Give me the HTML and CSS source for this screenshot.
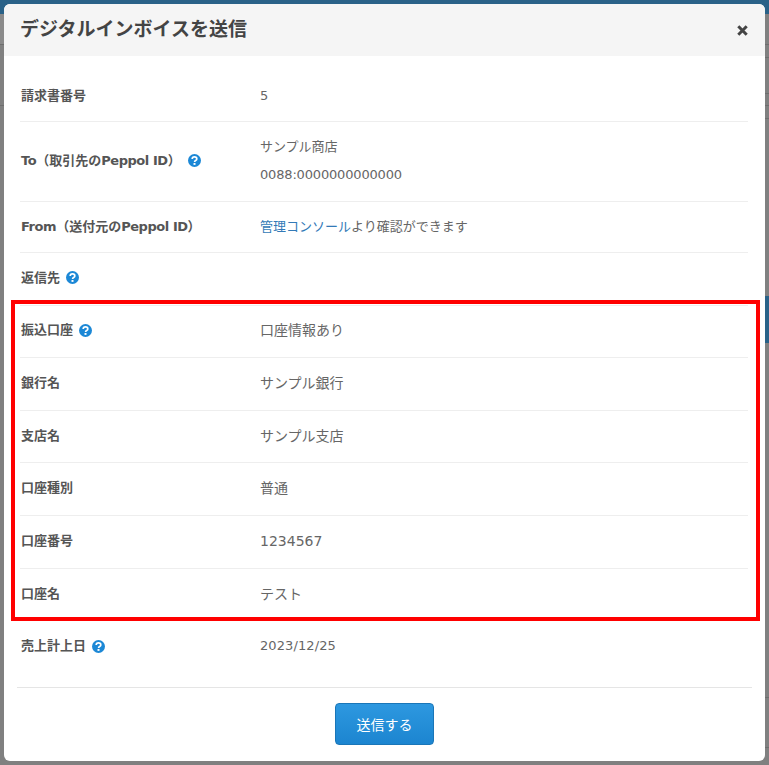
FILE: index.html
```html
<!DOCTYPE html>
<html lang="ja">

<head>
	<meta charset="UTF-8">
	<meta name="viewport" content="width=device-width, initial-scale=1.0">
	<title>デジタルインボイスを送信</title>
	<link rel="stylesheet" href="styles.css">
</head>

<body>
	<svg width="0" height="0" class="defs">
		<symbol id="help" viewBox="0 0 13 13">
			<circle cx="6.5" cy="6.5" r="6.5" fill="#1c88d6" />
			<path d="M4.2 5.1c0-1.4 1-2.2 2.3-2.2s2.3.8 2.3 2c0 1.7-2.2 1.6-2.2 3" fill="none" stroke="#fff" stroke-width="1.7" />
			<rect x="5.5" y="9" width="2" height="1.9" fill="#fff" />
		</symbol>
	</svg>

	<div class="page-head"></div>
	<div class="side side-left"></div>
	<div class="side side-right"></div>

	<div class="modal">
		<div class="modal-head">
			<h3>デジタルインボイスを送信</h3>
			<svg class="close" width="11" height="11" viewBox="0 0 11 11">
				<path d="M1.3 1.3l8.4 8.4M9.7 1.3l-8.4 8.4" stroke="#444" stroke-width="3" />
			</svg>
		</div>

		<div class="modal-body">
			<div class="row row-first">
				<div class="label">請求書番号</div>
				<div class="value">5</div>
			</div>
			<div class="row row-tall">
				<div class="label"><span class="latin">To</span>（取引先の<span class="latin">Peppol ID</span>）<svg class="help help-wide"><use href="#help" /></svg></div>
				<div class="value">
					<p>サンプル商店</p>
					<p class="peppol-id">0088:0000000000000</p>
				</div>
			</div>
			<div class="row row-from">
				<div class="label"><span class="latin">From</span>（送付元の<span class="latin">Peppol ID</span>）</div>
				<div class="value"><a href="#">管理コンソール</a>より確認ができます</div>
			</div>
			<div class="row row-reply">
				<div class="label">返信先<svg class="help"><use href="#help" /></svg></div>
				<div class="value"></div>
			</div>
			<div class="row bank">
				<div class="label">振込口座<svg class="help"><use href="#help" /></svg></div>
				<div class="value">口座情報あり</div>
			</div>
			<div class="row bank">
				<div class="label">銀行名</div>
				<div class="value">サンプル銀行</div>
			</div>
			<div class="row bank">
				<div class="label">支店名</div>
				<div class="value">サンプル支店</div>
			</div>
			<div class="row bank">
				<div class="label">口座種別</div>
				<div class="value">普通</div>
			</div>
			<div class="row bank">
				<div class="label">口座番号</div>
				<div class="value">1234567</div>
			</div>
			<div class="row bank row-last">
				<div class="label">口座名</div>
				<div class="value">テスト</div>
			</div>
			<div class="row row-date">
				<div class="label">売上計上日<svg class="help"><use href="#help" /></svg></div>
				<div class="value date">2023/12/25</div>
			</div>
		</div>

		<div class="modal-foot">
			<button class="send">送信する</button>
		</div>

		<div class="highlight"></div>
	</div>
</body>

</html>
```

FILE: styles.css
```css
* {
	padding: 0;
	margin: 0;
	box-sizing: border-box;
}

html,
body {
	height: 765px;
	overflow: hidden;
}

body {
	position: relative;
	background: #808080;
	font-family: "DejaVu Sans", "Noto Sans CJK JP", sans-serif;
	font-size: 13px;
	line-height: 20px;
	color: #555;
}

.defs {
	position: absolute;
}

.page-head {
	height: 14px;
	background: #2a6288;
}

/* what shows of the page behind the modal */
.side {
	position: absolute;
	top: 14px;
	bottom: 0;
	width: 4px;
	background-repeat: no-repeat;
	background-size: 4px 1px;
}

.side-left {
	left: 0;
	background-image: linear-gradient(#6e6e6e, #6e6e6e), linear-gradient(#6e6e6e, #6e6e6e), linear-gradient(#8a8a8a, #8a8a8a);
	background-size: 4px 1px, 4px 1px, 4px 30px;
	background-position: 0 30px, 0 91px, 0 0;
}

.side-right {
	right: 0;
	background-image:
		linear-gradient(#2a6288, #2a6288),
		linear-gradient(#6e6e6e, #6e6e6e), linear-gradient(#6e6e6e, #6e6e6e),
		linear-gradient(#6e6e6e, #6e6e6e), linear-gradient(#6e6e6e, #6e6e6e),
		linear-gradient(#6e6e6e, #6e6e6e), linear-gradient(#6e6e6e, #6e6e6e),
		linear-gradient(#6e6e6e, #6e6e6e);
	background-size: 4px 47px, 4px 1px, 4px 1px, 4px 1px, 4px 1px, 4px 1px, 4px 1px, 4px 1px;
	background-position: 0 282px, 0 30px, 0 43px, 0 79px, 0 91px, 0 104px, 0 683px, 0 733px;
}

.modal {
	position: absolute;
	left: 4px;
	top: 4px;
	width: 761px;
	height: 757px;
	background: #fff;
	border-radius: 6px;
	overflow: hidden;
}

.modal-head {
	height: 52px;
	padding: 0 17px 0 16px;
	background: #f5f5f5;
	display: flex;
	align-items: center;
	justify-content: space-between;
}

.modal-head h3 {
	font-size: 19px;
	font-weight: bold;
	line-height: 24px;
	margin-bottom: 3px;
	color: #444;
}

.close {
	margin-top: 1px;
}

.modal-body {
	padding: 13px 17px 0 16px;
}

.row {
	height: 53px;
	padding-bottom: 2px;
	display: flex;
	align-items: center;
	border-bottom: 1px solid #eee;
}

.row-first {
	padding: 2px 0 0;
}

.row-tall {
	height: 80px;
}

.row-from {
	height: 51px;
	padding-bottom: 0;
}

.row-reply {
	height: 52.6px;
}

.bank {
	height: 52.6px;
	padding-bottom: 2px;
}

.row-last {
	border-bottom: 0;
}

.row-date {
	height: 66px;
	align-items: flex-start;
	padding: 15px 0 0;
	border-bottom: 0;
}

.label {
	width: 240px;
	flex: none;
	padding-left: 1px;
	font-weight: bold;
	display: flex;
	align-items: center;
}

.latin {
	letter-spacing: -0.45px;
}

.value {
	flex: 1;
	color: #666;
}

.value p {
	line-height: 28px;
}

.peppol-id {
	letter-spacing: -0.17px;
}

.date {
	letter-spacing: 0.1px;
}

.value a {
	color: #337ab7;
	text-decoration: none;
}

.bank .value {
	font-size: 14px;
}

.help {
	width: 13px;
	height: 13px;
	margin-left: 6px;
	flex: none;
}

.help-wide {
	margin-left: 7px;
}

.modal-foot {
	margin: 0 13px;
	padding-top: 15px;
	border-top: 1px solid #e5e5e5;
	display: flex;
	justify-content: center;
}

.send {
	width: 99px;
	height: 42px;
	background: linear-gradient(#2d98e0, #1c85d0);
	border: 1px solid #1a76b8;
	border-radius: 4px;
	font-family: inherit;
	font-size: 14px;
	color: #fff;
}

.highlight {
	position: absolute;
	left: 7px;
	top: 296px;
	width: 749px;
	height: 321px;
	border: 4px solid #f00;
}
```
